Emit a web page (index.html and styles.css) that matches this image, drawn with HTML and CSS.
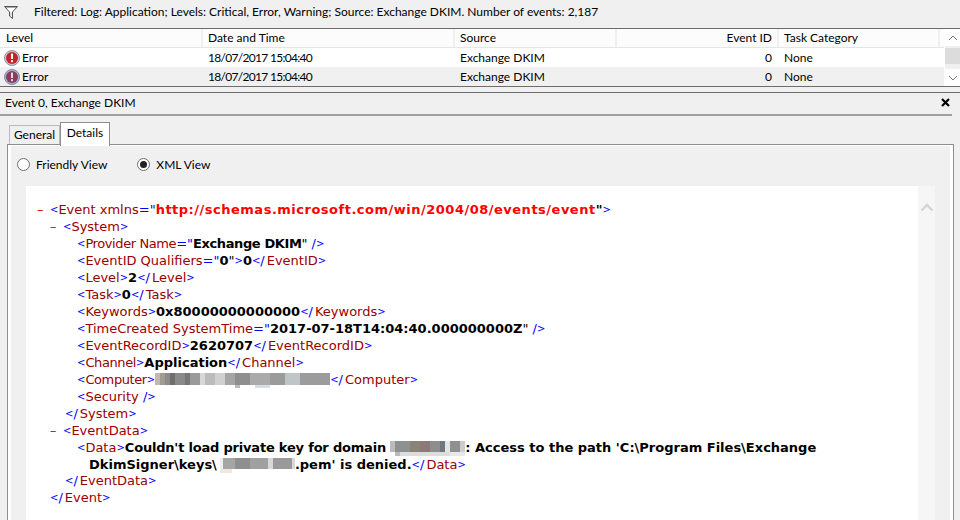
FILE: index.html
```html
<!DOCTYPE html>
<html lang="en">
<head>
<meta charset="utf-8">
<title>Event Viewer</title>
<link rel="stylesheet" href="styles.css">
</head>
<body>
<div class="filterbar">
  <svg class="funnel" width="14" height="13" viewBox="0 0 14 13"><path d="M0.5 0.5H13.5L8.5 6V12.5L5.5 10V6Z" fill="#fff" stroke="#555"/><path d="M2 1.5H12" stroke="#aaa"/><path d="M7 6.5V10" stroke="#bbb"/></svg>
  <span>Filtered: Log: Application; Levels: Critical, Error, Warning; Source: Exchange DKIM. Number of events: 2,187</span>
</div>
<div class="grid">
  <div class="table">
    <div class="row head">
      <div class="c level">Level</div><div class="c date">Date and Time</div><div class="c source">Source</div><div class="c id">Event ID</div><div class="c task">Task Category</div>
    </div>
    <div class="row">
      <div class="c level"><svg class="err" width="16" height="16" viewBox="0 0 16 16"><circle cx="8" cy="8" r="7.5" fill="#c9ccd2" stroke="#8e9198"/><circle cx="8" cy="8" r="6" fill="#c4242a"/><rect x="7" y="3.6" width="2" height="5.4" fill="#fff"/><rect x="7" y="10.2" width="2" height="2" fill="#fff"/></svg>Error</div><div class="c date">18/07/2017 15:04:40</div><div class="c source">Exchange DKIM</div><div class="c id">0</div><div class="c task">None</div>
    </div>
    <div class="row alt">
      <div class="c level"><svg class="err" width="16" height="16" viewBox="0 0 16 16"><circle cx="8" cy="8" r="7.5" fill="#a9b5d0" stroke="#7f8aa8"/><circle cx="8" cy="8" r="6" fill="#8e3a5c"/><rect x="7" y="3.6" width="2" height="5.4" fill="#e4dce4"/><rect x="7" y="10.2" width="2" height="2" fill="#e4dce4"/></svg>Error</div><div class="c date">18/07/2017 15:04:40</div><div class="c source">Exchange DKIM</div><div class="c id">0</div><div class="c task">None</div>
    </div>
  </div>
  <div class="vscroll">
    <div class="sbtn"><svg width="10" height="6" viewBox="0 0 10 6"><path d="M1 5L5 1L9 5" fill="none" stroke="#777"/></svg></div>
    <div class="thumb"></div>
    <div class="track"></div>
    <div class="sbtn"><svg width="10" height="6" viewBox="0 0 10 6"><path d="M1 1L5 5L9 1" fill="none" stroke="#777"/></svg></div>
  </div>
</div>
<div class="divider"></div>
<div class="titlebar">
  <span>Event 0, Exchange DKIM</span>
  <svg class="close" width="9" height="9" viewBox="0 0 9 9"><path d="M1 1L8 8M8 1L1 8" stroke="#000" stroke-width="2.2"/></svg>
</div>
<div class="tabs">
  <div class="tab">General</div>
  <div class="tab active">Details</div>
</div>
<div class="panel">
  <div class="radios">
    <label class="radio"><span class="dot"></span>Friendly View</label>
    <label class="radio on"><span class="dot"></span>XML View</label>
  </div>
  <div class="viewer">
    <div class="xml">
      <div class="l i0"><span class="m">–</span><b class="p">&lt;</b><i>Event xmlns</i><b class="s">="</b><span class="url">http://schemas.microsoft.com/win/2004/08/events/event</span><b class="v">"</b><b class="p">&gt;</b></div>
      <div class="l i1"><span class="m">–</span><b class="p">&lt;</b><i>System</i><b class="p">&gt;</b></div>
      <div class="l i2"><b class="p">&lt;</b><i class="tight">Provider Name</i><b class="s">="</b><span class="v tight">Exchange DKIM</span><b class="v n">"</b> <b class="s">/</b><b class="p">&gt;</b></div>
      <div class="l i2"><b class="p">&lt;</b><i>EventID Qualifiers</i><b class="s">="</b><span class="v">0</span><b class="v n">"</b><b class="p">&gt;</b><span class="v">0</span><b class="p">&lt;</b><b class="s">/</b><i>EventID</i><b class="p">&gt;</b></div>
      <div class="l i2"><b class="p">&lt;</b><i>Level</i><b class="p">&gt;</b><span class="v">2</span><b class="p">&lt;</b><b class="s">/</b><i>Level</i><b class="p">&gt;</b></div>
      <div class="l i2"><b class="p">&lt;</b><i>Task</i><b class="p">&gt;</b><span class="v">0</span><b class="p">&lt;</b><b class="s">/</b><i>Task</i><b class="p">&gt;</b></div>
      <div class="l i2"><b class="p">&lt;</b><i>Keywords</i><b class="p">&gt;</b><span class="v">0x80000000000000</span><b class="p">&lt;</b><b class="s">/</b><i>Keywords</i><b class="p">&gt;</b></div>
      <div class="l i2"><b class="p">&lt;</b><i>TimeCreated SystemTime</i><b class="s">="</b><span class="v">2017-07-18T14:04:40.000000000Z</span><b class="v n">"</b> <b class="s">/</b><b class="p">&gt;</b></div>
      <div class="l i2"><b class="p">&lt;</b><i>EventRecordID</i><b class="p">&gt;</b><span class="v">2620707</span><b class="p">&lt;</b><b class="s">/</b><i>EventRecordID</i><b class="p">&gt;</b></div>
      <div class="l i2"><b class="p">&lt;</b><i class="tight">Channel</i><b class="p">&gt;</b><span class="v">Application</span><b class="p">&lt;</b><b class="s">/</b><i>Channel</i><b class="p">&gt;</b></div>
      <div class="l i2"><b class="p">&lt;</b><i class="tight">Computer</i><b class="p">&gt;</b><span class="blur b-long"></span><b class="p">&lt;</b><b class="s">/</b><i>Computer</i><b class="p">&gt;</b></div>
      <div class="l i2"><b class="p">&lt;</b><i>Security</i> <b class="s">/</b><b class="p">&gt;</b></div>
      <div class="l i3"><b class="p">&lt;</b><b class="s">/</b><i>System</i><b class="p">&gt;</b></div>
      <div class="l i1"><span class="m">–</span><b class="p">&lt;</b><i>EventData</i><b class="p">&gt;</b></div>
      <div class="l i2"><b class="p">&lt;</b><i>Data</i><b class="p">&gt;</b><span class="v"><span class="snug">Couldn't load private key for domain </span><span class="blur b-dom"></span>: Access to the path 'C:\Program Files\Exchange</span></div>
      <div class="l i4"><span class="v">DkimSigner\keys\<span class="blur b-key"></span>.pem' is denied.</span><b class="p">&lt;</b><b class="s">/</b><i>Data</i><b class="p">&gt;</b></div>
      <div class="l i3"><b class="p">&lt;</b><b class="s">/</b><i>EventData</i><b class="p">&gt;</b></div>
      <div class="l i5"><b class="p">&lt;</b><b class="s">/</b><i>Event</i><b class="p">&gt;</b></div>
    </div>
    <div class="xscroll"><svg width="14" height="9" viewBox="0 0 14 9"><path d="M1.5 7.5L7 2L12.5 7.5" fill="none" stroke="#d4d4d4" stroke-width="2.4"/></svg></div>
  </div>
</div>
</body>
</html>
```
FILE: styles.css
```css
* { box-sizing: border-box; }
html, body { margin: 0; height: 520px; overflow: hidden; }
body {
  width: 960px;
  background: #f0f0f0;
  font: 12px/16px Lato, "Noto Sans", sans-serif;
  color: #000;
}
.filterbar {
  height: 28px;
  display: flex;
  align-items: center;
  padding: 0 0 4px 4px;
  gap: 16px;
}
.funnel { flex: none; }
.grid {
  height: 59px;
  display: flex;
  background: #fff;
  border-top: 1px solid #6d6d6d;
  border-bottom: 1px solid #6d6d6d;
}
.table { width: 944px; flex: none; background: #fff; }
.row { display: flex; height: 19px; align-items: center; background: #fff; }
.row.alt { background: #f0f0f0; }
.row.head { height: 19px; background: #fcfcfc; border-bottom: 1px solid #e5e5e5; }
.c { padding-left: 5px; white-space: nowrap; display: flex; align-items: center; height: 100%; }
.level { width: 203px; padding-left: 6px; }
.date { width: 252px; letter-spacing: -0.7px; }
.source { width: 162px; }
.id { width: 162px; justify-content: flex-end; padding-right: 7px; }
.task { width: 165px; }
.head .c { border-right: 2px solid #f0f0f0; }
.head .date { letter-spacing: 0; }
.head .id { padding-right: 5px; }
.head .task { width: 161px; }
.level .err { margin: 0 2px 0 -2px; flex: none; }
.vscroll { width: 16px; display: flex; flex-direction: column; background: #f0f0f0; border-left: 1px solid #fff; }
.sbtn { height: 17px; display: flex; align-items: center; justify-content: center; background: #fff; }
.thumb { height: 16px; background: #dcdcdc; margin-top: 2px; }
.track { flex: 1; }
.divider { height: 6px; border-bottom: 1px solid #6d6d6d; }
.titlebar {
  height: 23px;
  display: flex;
  align-items: center;
  justify-content: space-between;
  padding: 0 2px 2px 5px;
  margin-right: 8px;
  border-bottom: 2px solid #a0a0a0;
}
.tabs { display: flex; padding-left: 9px; height: 28px; align-items: flex-end; }
.tab {
  width: 51px;
  height: 19px;
  padding-top: 1px;
  text-align: center;
  border: 1px solid #b9b9b9;
  border-bottom: 0;
  background: #f0f0f0;
}
.tab.active {
  height: 24px;
  padding-top: 2px;
  background: #fff;
  border-color: #8e8e8e;
  position: relative;
  margin-bottom: -2px;
  z-index: 1;
  width: 50px;
}
.panel {
  margin: 0 6px 0 7px;
  height: 376px;
  border: 1px solid #8e8e8e;
  border-bottom: 0;
  box-shadow: inset 3px 0 0 #fff, inset -3px 0 0 #fff, inset 0 1px 0 #fff;
  padding-left: 18px;
}
.radios { display: flex; height: 41px; align-items: center; margin-left: -9px; padding-bottom: 2px; }
.radio { display: flex; align-items: center; margin-right: 30px; }
.dot {
  width: 13px; height: 13px; border-radius: 50%;
  border: 1px solid #6f6f6f; background: #fff; margin-right: 6px;
  display: flex; align-items: center; justify-content: center;
}
.radio.on .dot::after { content: ""; width: 7px; height: 7px; border-radius: 50%; background: #222; }
.viewer { display: flex; width: 909px; height: 335px; }
.xml {
  width: 892px;
  background: #fff;
  padding-top: 15px;
  font: 13px/17px "DejaVu Sans", Verdana, sans-serif;
}
.l { white-space: nowrap; height: 17px; }
.l b, .l i { font-weight: normal; font-style: normal; }
.l i { color: #990000; }
.l .p { color: #0000ff; font-size: 10px; vertical-align: 1px; }
.l .s { color: #0000ff; }
.l .s + i { margin-left: 2px; }
.l .v { color: #000; font-weight: bold; }
.l .n { font-weight: normal; }
.l .url { color: #ff0000; font-weight: bold; letter-spacing: 0.5px; }
.l .tight { letter-spacing: -0.4px; }
.l .snug { letter-spacing: -0.2px; }
.m { color: #dd0000; display: inline-block; width: 13px; }
.i0 { padding-left: 11px; }
.i1 { padding-left: 24px; }
.i2 { padding-left: 51px; }
.i3 { padding-left: 39px; }
.i4 { padding-left: 63px; height: 16px; }
.i5 { padding-left: 24px; }
.blur { display: inline-block; height: 15px; vertical-align: -4px; background-repeat: no-repeat; }
.b-long {
  width: 175px;
  background-size: 100% 12px, 100% 15px;
  background-image:
    linear-gradient(90deg, #c4b8ac 0 5px, #a39a90 5px 10px, #8b8b8b 10px 15px, #6e6e6e 15px 20px, #8a8a8a 20px 30px, #777 30px 35px, #9a9a9a 35px 45px, #d8d8d8 45px 50px, #bbb 50px 60px, #d0d0d0 60px 70px, #a5a5a5 70px 80px, #8f8f8f 80px 95px, #aaa 95px 115px, #9b9b9b 115px 130px, #c0c6c8 130px 145px, #9c9c9c 145px 175px),
    linear-gradient(90deg, #fff 0 80px, #bbb 80px 85px, #fff 85px 100px, #d9dde0 100px 115px, #fff 115px 175px);
}
.b-dom {
  width: 75px;
  background-size: 100% 11px, 100% 15px;
  background-image:
    linear-gradient(90deg, #bbb 0 5px, #8f9090 5px 20px, #8a8478 20px 30px, #8b7a78 30px 40px, #8e8e8e 40px 50px, #6f7880 50px 55px, #e4e4e4 55px 60px, #8f8f8f 60px 70px, #ccc 70px 75px),
    linear-gradient(90deg, #fff 0 5px, #bbb 5px 10px, #ddd 10px 60px, #e8e8e8 60px 75px);
}
.b-key {
  width: 75px;
  margin-left: 3px;
  background-size: 100% 11px, 100% 15px;
  background-image:
    linear-gradient(90deg, #eee 0 3px, #a5a5a5 3px 15px, #8f8f8f 15px 30px, #a0a0a0 30px 48px, #d8d8d8 48px 53px, #9a9a9a 53px 72px, #d8d8d8 72px 75px),
    linear-gradient(90deg, #f0e8e0 0 12px, #fff 12px 75px);
}
.xscroll {
  width: 17px;
  background: #f6f6f6;
  padding-top: 17px;
  display: flex;
  justify-content: center;
  align-items: flex-start;
}
```
